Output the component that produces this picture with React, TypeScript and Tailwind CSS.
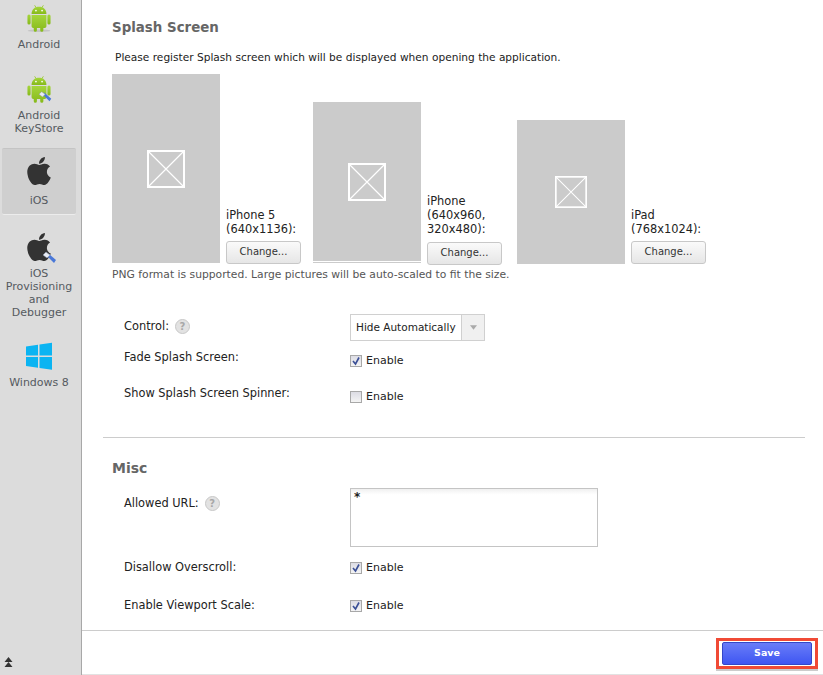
import { FaApple } from 'react-icons/fa';

function Android({ wrench }: { wrench?: boolean }) {
  return (
    <svg width="26" height="28" viewBox="0 0 28 32">
      <defs>
        <linearGradient id="droid" x1="0" y1="0" x2="0" y2="1">
          <stop offset="0" stopColor="#a5d63c" />
          <stop offset="1" stopColor="#86b91a" />
        </linearGradient>
      </defs>
      {!wrench && <ellipse cx="14" cy="30.500" rx="13" ry="1.500" fill="#c4c4c4" />}
      <path d="M9 1.500l2 3M19 1.500l-2 3" stroke="#97c92b" strokeWidth="1" />
      <path d="M5.500 11.500C5.500 6 9 3 14 3s8.500 3 8.500 8.500z" fill="url(#droid)" />
      <circle cx="10.500" cy="7.500" r="1" fill="#fff" />
      <circle cx="17.500" cy="7.500" r="1" fill="#fff" />
      <path d="M5.500 12.500h17v13a2 2 0 0 1-2 2h-1.500v2.500a1.800 1.800 0 0 1-3.600 0v-2.500h-3.800v2.500a1.800 1.800 0 0 1-3.600 0v-2.500H7.500a2 2 0 0 1-2-2z" fill="url(#droid)" />
      <rect x="0.800" y="12" width="3.600" height="11.500" rx="1.800" fill="url(#droid)" />
      <rect x="23.600" y="12" width="3.600" height="11.500" rx="1.800" fill="url(#droid)" />
      {wrench && (
        <g>
          <path d="M18 22l2-2 8 7-2 3z" fill="#4a78d8" />
          <path d="M14 22l3-3 4 3-3 3z" fill="#e8ecf4" stroke="#8a94a8" strokeWidth="0.500" />
        </g>
      )}
    </svg>
  );
}

function Apple({ wrench }: { wrench?: boolean }) {
  return (
    <div className="relative w-[28px] h-[32px] flex justify-center items-center">
      <FaApple className="text-[#333333] w-[28px] h-[32px]" />
      {wrench && (
        <svg className="absolute right-[-3px] bottom-[-1px]" width="14" height="13" viewBox="0 0 14 13">
          <path d="M5 5l2-2 7 6-2 3z" fill="#4a78d8" />
          <path d="M1 4l3-3 4 3-3 3z" fill="#e8ecf4" stroke="#8a94a8" strokeWidth="0.500" />
        </svg>
      )}
    </div>
  );
}

function Windows() {
  return (
    <svg width="28" height="30" viewBox="0 0 28 30">
      <path d="M1 5.500l12-1.700v10.700H1zM14.500 3.600L27 1.800v12.700H14.500zM1 16h12v10.700L1 25zM14.500 16H27v12.700l-12.500-1.800z" fill="#0bb4f2" />
    </svg>
  );
}

function SplashImage({ height, size = 38 }: { height: string; size?: number }) {
  return (
    <div className={`w-[108px] bg-[#cbcbcb] flex items-center justify-center shrink-0 ${height}`}>
      <svg width={size} height={size} viewBox="0 0 38 38">
        <rect x="1" y="1" width="36" height="36" fill="none" stroke="#fff" strokeWidth="2" />
        <path d="M1 1l36 36M37 1L1 37" stroke="#fff" strokeWidth="1.200" />
      </svg>
    </div>
  );
}

function ChangeButton() {
  return (
    <button className="w-[75px] h-[23px] rounded-[3px] border border-[#c8c8c8] bg-gradient-to-b from-[#fafafa] to-[#e6e6e6] text-[10px] text-[#333333] pb-[3px]">
      Change...
    </button>
  );
}

function Help() {
  return (
    <span className="inline-flex w-[15px] h-[15px] rounded-full bg-[#e2e2e2] border border-[#c8c8c8] text-[#a8a8a8] text-[10px] font-bold items-center justify-center ml-[6px]">
      ?
    </span>
  );
}

function Check({ checked }: { checked?: boolean }) {
  return (
    <span className="flex items-center text-[11px] text-[#222222]">
      <span className="w-[12px] h-[12px] border border-[#a8a8a8] bg-gradient-to-b from-[#dcdce4] to-[#f4f4f4] flex items-center justify-center mr-[4px]">
        {checked && (
          <svg width="10" height="10" viewBox="0 0 10 10">
            <path d="M2 5l2.500 3L8 1.500" fill="none" stroke="#3a4f96" strokeWidth="1.600" />
          </svg>
        )}
      </span>
      Enable
    </span>
  );
}

function NavItem({ icon, label, labelGap, h, active }: { icon: React.ReactNode; label: string; labelGap: string; h: string; active?: boolean }) {
  return (
    <div className={`flex flex-col items-center mx-[2px] w-[74px] rounded-[2px] ${h} ${active ? 'bg-[#cfcfcf] border-t border-[#c4c4c4] border-b-[#ececec] border-b pt-[4px]' : ''}`}>
      <div className="h-[36px] flex items-center justify-center shrink-0">{icon}</div>
      <div className={`text-[11px] leading-[13px] text-center text-[#555a60] ${labelGap}`}>{label}</div>
    </div>
  );
}

export default function App() {
  return (
    <div className="w-[823px] h-[675px] flex overflow-hidden bg-white text-[11.400px] text-[#222222] font-['DejaVu_Sans',sans-serif]">
      <aside className="w-[82px] shrink-0 bg-[#dcdcdc] border-r border-[#a8a8a8] flex flex-col">
        <div className="flex-1 overflow-hidden">
          <div className="h-[71px]"><NavItem h="h-[71px]" labelGap="mt-[2px]" icon={<Android />} label="Android" /></div>
          <div className="h-[77px]"><NavItem h="h-[70px]" labelGap="mt-[2px]" icon={<Android wrench />} label="Android KeyStore" /></div>
          <NavItem active h="h-[67px]" labelGap="mt-[5px]" icon={<Apple />} label="iOS" />
          <div className="pt-[14px] h-[123px]"><NavItem h="h-[90px]" labelGap="mt-[2px]" icon={<Apple wrench />} label="iOS Provisioning and Debugger" /></div>
          <NavItem h="h-[60px]" labelGap="mt-[2px]" icon={<Windows />} label="Windows 8" />
        </div>
        <div className="h-[18px] pl-[4px] text-[#333333]">
          <svg width="9" height="11" viewBox="0 0 9 11">
            <path d="M4.500 0l4 5h-8zM4.500 5l4 5h-8z" fill="#333333" />
          </svg>
        </div>
      </aside>

      <main className="flex-1 flex flex-col min-w-0">
        <div className="flex-1 overflow-hidden pl-[30px] pt-[19px]">
          <h2 className="text-[13.400px] leading-[18px] font-bold text-[#666666]">Splash Screen</h2>
          <p className="mt-[14px] ml-[3px] text-[10.600px] leading-[13px]">Please register Splash screen which will be displayed when opening the application.</p>

          <div className="flex items-end mt-[10px]">
            <div className="flex items-end">
              <SplashImage height="h-[189px]" />
              <div className="ml-[6px] w-[75px] mb-[-1px]">
                <div className="leading-[14px]">iPhone 5<br />(640x1136):</div>
                <div className="mt-[5px]"><ChangeButton /></div>
              </div>
            </div>
            <div className="flex items-end ml-[12px]">
              <div className="border-b border-[#cbcbcb] pb-[1px]"><SplashImage height="h-[159px]" /></div>
              <div className="ml-[6px] w-[75px] mb-[-2px]">
                <div className="leading-[14px]">iPhone<br />(640x960,<br />320x480):</div>
                <div className="mt-[6px]"><ChangeButton /></div>
              </div>
            </div>
            <div className="flex items-end ml-[15px] mb-[-1px]">
              <SplashImage height="h-[144px]" size={32} />
              <div className="ml-[6px] w-[75px]">
                <div className="leading-[14px]">iPad<br />(768x1024):</div>
                <div className="mt-[5px]"><ChangeButton /></div>
              </div>
            </div>
          </div>
          <p className="mt-[5px] text-[10.750px] leading-[13px] text-[#555555]">PNG format is supported. Large pictures will be auto-scaled to fit the size.</p>

          <div className="mt-[33px] pl-[12px]">
            <div className="flex items-center h-[27px]">
              <div className="w-[226px] flex items-center mt-[-1px]">Control:<Help /></div>
              <div className="flex w-[135px] h-[27px] border border-[#d0d0d0]">
                <div className="flex-1 flex items-center pl-[5px] text-[10.500px] text-[#222222] whitespace-nowrap overflow-hidden">Hide Automatically</div>
                <div className="w-[23px] shrink-0 bg-[#f0f0f0] border-l border-[#d0d0d0] flex items-center justify-center">
                  <svg width="7" height="5" viewBox="0 0 9 6"><path d="M0 0h9L4.500 6z" fill="#aaaaaa" /></svg>
                </div>
              </div>
            </div>
            <div className="flex items-center h-[20px] mt-[10px]">
              <div className="w-[226px] mt-[-6px]">Fade Splash Screen:</div>
              <Check checked />
            </div>
            <div className="flex items-center h-[20px] mt-[16px]">
              <div className="w-[226px] mt-[-6px]">Show Splash Screen Spinner:</div>
              <Check />
            </div>
          </div>

          <div className="ml-[-9px] mr-[18px] mt-[30px] border-t border-[#cccccc]" />

          <h2 className="mt-[21px] text-[14px] leading-[18px] font-bold text-[#666666]">Misc</h2>

          <div className="mt-[11px] pl-[12px]">
            <div className="flex items-start">
              <div className="w-[226px] flex items-center h-[31px]">Allowed URL:<Help /></div>
              <div className="w-[248px] h-[59px] border border-[#c4c4c4] bg-gradient-to-b from-[#f0f0f0] to-white to-[10%] px-[3px] text-[12px] leading-[16px] font-bold text-[#222222]">*</div>
            </div>
            <div className="flex items-center h-[20px] mt-[11px]">
              <div className="w-[226px] mt-[-1px]">Disallow Overscroll:</div>
              <Check checked />
            </div>
            <div className="flex items-center h-[20px] mt-[18px]">
              <div className="w-[226px]">Enable Viewport Scale:</div>
              <Check checked />
            </div>
          </div>
        </div>

        <footer className="h-[45px] shrink-0 border-t border-b border-t-[#cccccc] border-b-[#e2e2e2] flex justify-end items-start pr-[5px] pt-[7px]">
          <div className="border-[3px] border-[#f04a35] px-[3px] py-[1px] shadow-[0_2px_0_#cccccc]">
            <button className="block w-[90px] h-[23px] rounded-[2px] border border-[#3347c8] bg-gradient-to-b from-[#6a7cf8] to-[#3f55f2] text-white text-[9.500px] font-bold">
              Save
            </button>
          </div>
        </footer>
      </main>
    </div>
  );
}
